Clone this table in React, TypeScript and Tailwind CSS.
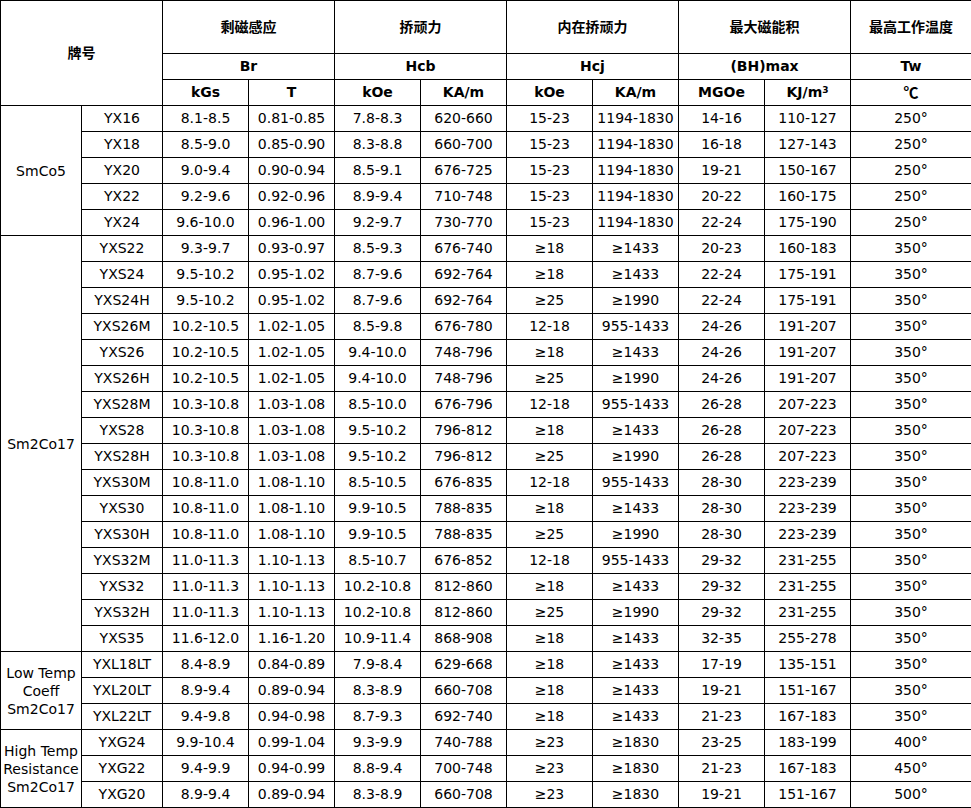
const groups: { name: string[]; rows: string[][] }[] = [
  {
    name: ["SmCo5"],
    rows: [
      ["YX16", "8.1-8.5", "0.81-0.85", "7.8-8.3", "620-660", "15-23", "1194-1830", "14-16", "110-127", "250°"],
      ["YX18", "8.5-9.0", "0.85-0.90", "8.3-8.8", "660-700", "15-23", "1194-1830", "16-18", "127-143", "250°"],
      ["YX20", "9.0-9.4", "0.90-0.94", "8.5-9.1", "676-725", "15-23", "1194-1830", "19-21", "150-167", "250°"],
      ["YX22", "9.2-9.6", "0.92-0.96", "8.9-9.4", "710-748", "15-23", "1194-1830", "20-22", "160-175", "250°"],
      ["YX24", "9.6-10.0", "0.96-1.00", "9.2-9.7", "730-770", "15-23", "1194-1830", "22-24", "175-190", "250°"],
    ],
  },
  {
    name: ["Sm2Co17"],
    rows: [
      ["YXS22", "9.3-9.7", "0.93-0.97", "8.5-9.3", "676-740", "≥18", "≥1433", "20-23", "160-183", "350°"],
      ["YXS24", "9.5-10.2", "0.95-1.02", "8.7-9.6", "692-764", "≥18", "≥1433", "22-24", "175-191", "350°"],
      ["YXS24H", "9.5-10.2", "0.95-1.02", "8.7-9.6", "692-764", "≥25", "≥1990", "22-24", "175-191", "350°"],
      ["YXS26M", "10.2-10.5", "1.02-1.05", "8.5-9.8", "676-780", "12-18", "955-1433", "24-26", "191-207", "350°"],
      ["YXS26", "10.2-10.5", "1.02-1.05", "9.4-10.0", "748-796", "≥18", "≥1433", "24-26", "191-207", "350°"],
      ["YXS26H", "10.2-10.5", "1.02-1.05", "9.4-10.0", "748-796", "≥25", "≥1990", "24-26", "191-207", "350°"],
      ["YXS28M", "10.3-10.8", "1.03-1.08", "8.5-10.0", "676-796", "12-18", "955-1433", "26-28", "207-223", "350°"],
      ["YXS28", "10.3-10.8", "1.03-1.08", "9.5-10.2", "796-812", "≥18", "≥1433", "26-28", "207-223", "350°"],
      ["YXS28H", "10.3-10.8", "1.03-1.08", "9.5-10.2", "796-812", "≥25", "≥1990", "26-28", "207-223", "350°"],
      ["YXS30M", "10.8-11.0", "1.08-1.10", "8.5-10.5", "676-835", "12-18", "955-1433", "28-30", "223-239", "350°"],
      ["YXS30", "10.8-11.0", "1.08-1.10", "9.9-10.5", "788-835", "≥18", "≥1433", "28-30", "223-239", "350°"],
      ["YXS30H", "10.8-11.0", "1.08-1.10", "9.9-10.5", "788-835", "≥25", "≥1990", "28-30", "223-239", "350°"],
      ["YXS32M", "11.0-11.3", "1.10-1.13", "8.5-10.7", "676-852", "12-18", "955-1433", "29-32", "231-255", "350°"],
      ["YXS32", "11.0-11.3", "1.10-1.13", "10.2-10.8", "812-860", "≥18", "≥1433", "29-32", "231-255", "350°"],
      ["YXS32H", "11.0-11.3", "1.10-1.13", "10.2-10.8", "812-860", "≥25", "≥1990", "29-32", "231-255", "350°"],
      ["YXS35", "11.6-12.0", "1.16-1.20", "10.9-11.4", "868-908", "≥18", "≥1433", "32-35", "255-278", "350°"],
    ],
  },
  {
    name: ["Low Temp", "Coeff", "Sm2Co17"],
    rows: [
      ["YXL18LT", "8.4-8.9", "0.84-0.89", "7.9-8.4", "629-668", "≥18", "≥1433", "17-19", "135-151", "350°"],
      ["YXL20LT", "8.9-9.4", "0.89-0.94", "8.3-8.9", "660-708", "≥18", "≥1433", "19-21", "151-167", "350°"],
      ["YXL22LT", "9.4-9.8", "0.94-0.98", "8.7-9.3", "692-740", "≥18", "≥1433", "21-23", "167-183", "350°"],
    ],
  },
  {
    name: ["High Temp", "Resistance", "Sm2Co17"],
    rows: [
      ["YXG24", "9.9-10.4", "0.99-1.04", "9.3-9.9", "740-788", "≥23", "≥1830", "23-25", "183-199", "400°"],
      ["YXG22", "9.4-9.9", "0.94-0.99", "8.8-9.4", "700-748", "≥23", "≥1830", "21-23", "167-183", "450°"],
      ["YXG20", "8.9-9.4", "0.89-0.94", "8.3-8.9", "660-708", "≥23", "≥1830", "19-21", "151-167", "500°"],
    ],
  },
];

const cell = "border border-black p-0 text-center align-middle whitespace-nowrap";
const head = "border border-black p-0 text-center align-middle font-bold whitespace-nowrap";

export default function App() {
  return (
    <div className="w-[971px] h-[808px] bg-white text-black overflow-hidden font-['DejaVu_Sans','Noto_Sans_CJK_SC',sans-serif] text-[14px] leading-[17px]">
      <table className="border-collapse table-fixed w-[971px]">
        <colgroup>
          <col className="w-[81px]" />
          <col className="w-[81px]" />
          <col className="w-[86px]" />
          <col className="w-[86px]" />
          <col className="w-[86px]" />
          <col className="w-[86px]" />
          <col className="w-[86px]" />
          <col className="w-[86px]" />
          <col className="w-[86px]" />
          <col className="w-[86px]" />
          <col className="w-[121px]" />
        </colgroup>
        <thead>
          <tr className="h-[53px]">
            <th rowSpan={3} colSpan={2} className={head}>牌号</th>
            <th colSpan={2} className={head}>剩磁感应</th>
            <th colSpan={2} className={head}>挢顽力</th>
            <th colSpan={2} className={head}>内在挢顽力</th>
            <th colSpan={2} className={head}>最大磁能积</th>
            <th className={head}>最高工作温度</th>
          </tr>
          <tr className="h-[26px]">
            <th colSpan={2} className={head}>Br</th>
            <th colSpan={2} className={head}>Hcb</th>
            <th colSpan={2} className={head}>Hcj</th>
            <th colSpan={2} className={head}>(BH)max</th>
            <th className={head}>Tw</th>
          </tr>
          <tr className="h-[26px]">
            <th className={head}>kGs</th>
            <th className={head}>T</th>
            <th className={head}>kOe</th>
            <th className={head}>KA/m</th>
            <th className={head}>kOe</th>
            <th className={head}>KA/m</th>
            <th className={head}>MGOe</th>
            <th className={head}>
              KJ/m<sup className="text-[9px]">3</sup>
            </th>
            <th className={head}>
              <span className="font-['Noto_Sans_CJK_SC',sans-serif] font-bold text-[15px]">℃</span>
            </th>
          </tr>
        </thead>
        <tbody>
          {groups.map((g) =>
            g.rows.map((r, i) => (
              <tr key={r[0]} className="h-[26px]">
                {i === 0 && (
                  <td rowSpan={g.rows.length} className="border border-black p-0 text-center align-middle leading-[18px]">
                    {g.name.map((n) => (
                      <div key={n}>{n}</div>
                    ))}
                  </td>
                )}
                {r.map((v, j) => (
                  <td key={j} className={cell}>{v}</td>
                ))}
              </tr>
            ))
          )}
        </tbody>
      </table>
    </div>
  );
}
